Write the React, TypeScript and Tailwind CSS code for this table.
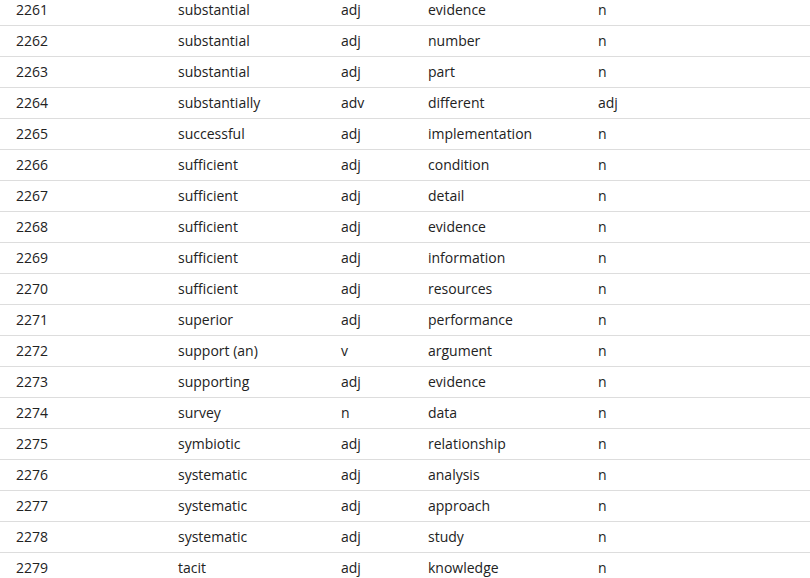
const rows: [string, string, string, string, string][] = [
  ["2261", "substantial", "adj", "evidence", "n"],
  ["2262", "substantial", "adj", "number", "n"],
  ["2263", "substantial", "adj", "part", "n"],
  ["2264", "substantially", "adv", "different", "adj"],
  ["2265", "successful", "adj", "implementation", "n"],
  ["2266", "sufficient", "adj", "condition", "n"],
  ["2267", "sufficient", "adj", "detail", "n"],
  ["2268", "sufficient", "adj", "evidence", "n"],
  ["2269", "sufficient", "adj", "information", "n"],
  ["2270", "sufficient", "adj", "resources", "n"],
  ["2271", "superior", "adj", "performance", "n"],
  ["2272", "support (an)", "v", "argument", "n"],
  ["2273", "supporting", "adj", "evidence", "n"],
  ["2274", "survey", "n", "data", "n"],
  ["2275", "symbiotic", "adj", "relationship", "n"],
  ["2276", "systematic", "adj", "analysis", "n"],
  ["2277", "systematic", "adj", "approach", "n"],
  ["2278", "systematic", "adj", "study", "n"],
  ["2279", "tacit", "adj", "knowledge", "n"],
];

export default function App() {
  return (
    <div className="h-screen overflow-hidden bg-white font-['Open_Sans',sans-serif] text-[14px] text-[#222]">
      <table className="-mt-[6px] w-full border-collapse">
        <tbody>
          {rows.map((r) => (
            <tr key={r[0]} className="h-[31px] border-b border-[#dddddd]">
              <td className="w-[178px] pl-4">{r[0]}</td>
              <td className="w-[163px]">{r[1]}</td>
              <td className="w-[87px]">{r[2]}</td>
              <td className="w-[170px]">{r[3]}</td>
              <td>{r[4]}</td>
            </tr>
          ))}
        </tbody>
      </table>
    </div>
  );
}
